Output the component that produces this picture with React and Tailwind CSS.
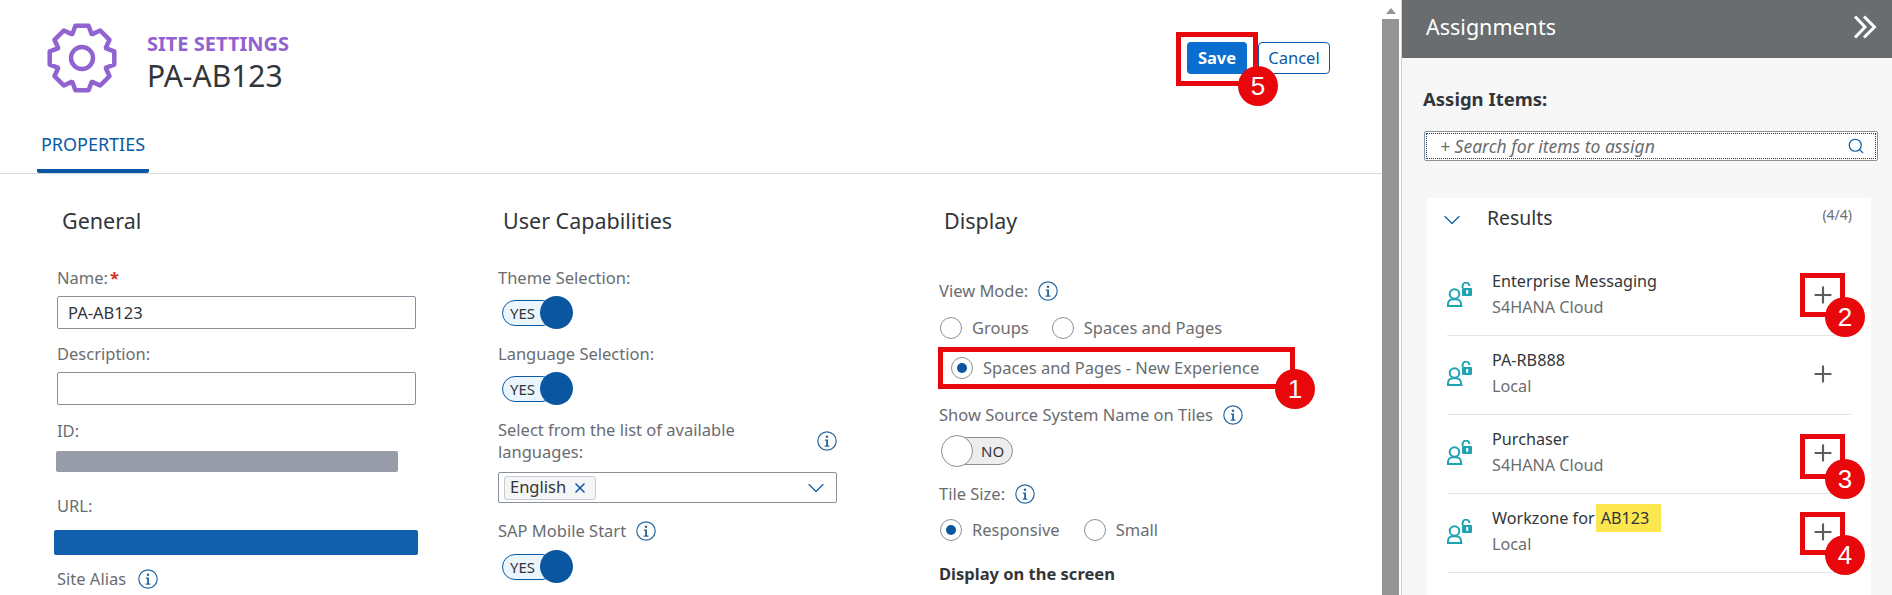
import React from 'react';
import { Search, ChevronDown, X, Plus } from 'lucide-react';

// 8-tooth gear outline, center 40,40
const gearPath = (() => {
  const pts = [];
  for (let i = 0; i < 8; i++) {
    const a = (i * Math.PI) / 4 - Math.PI / 2;
    [[-0.38, 26], [-0.2, 33], [0.2, 33], [0.38, 26]].forEach(([d, r]) => {
      pts.push(`${(40 + r * Math.cos(a + d)).toFixed(1)} ${(40 + r * Math.sin(a + d)).toFixed(1)}`);
    });
  }
  return 'M' + pts.join('L') + 'Z';
})();

const GearIcon = () => (
  <svg width="70" height="70" viewBox="5 5 70 70" fill="none" stroke="#9163d0" strokeWidth="4.5" strokeLinejoin="round">
    <path d={gearPath} />
    <circle cx="40" cy="40" r="11" />
  </svg>
);

const InfoIcon = ({ className = '' }) => (
  <svg width="20" height="20" viewBox="0 0 20 20" className={className}>
    <circle cx="10" cy="10" r="9.2" fill="none" stroke="#2b6a9f" strokeWidth="1.2" />
    <circle cx="10" cy="5.8" r="1.3" fill="#2b6a9f" />
    <path d="M7.8 8.6h3.2v6h1.4v1.1H7.6v-1.1h1.5v-4.9H7.8z" fill="#2b6a9f" />
  </svg>
);

const UserLockIcon = () => (
  <svg width="25" height="25" viewBox="0 0 25 25" fill="none" className="shrink-0 mt-[25px]">
    <circle cx="7.5" cy="12" r="4.8" stroke="#1fa3b3" strokeWidth="2" />
    <path d="M1 24v-2c0-3 2.2-4.8 5-4.8h3c2.8 0 5 1.8 5 4.8v2z" stroke="#1fa3b3" strokeWidth="2" />
    <path d="M0 24.3h15.5" stroke="#1fa3b3" strokeWidth="1.5" />
    <path d="M15.6 6V4a3.4 3.4 0 0 1 6.8 0" stroke="#1fa3b3" strokeWidth="2" />
    <rect x="15" y="6" width="10" height="8" rx="1" fill="#1fa3b3" />
    <rect x="19.2" y="8" width="2" height="3.8" fill="#fff" />
  </svg>
);

const Badge = ({ n }) => (
  <div className="absolute -right-[25px] -bottom-[25px] z-20 w-10 h-10 rounded-full bg-[#e8070a] text-white flex items-center justify-center text-[26px] leading-none font-['Liberation_Sans',sans-serif]">
    {n}
  </div>
);

const Label = ({ children, className = '' }) => (
  <div className={`h-6 leading-6 text-[#6a6d70] flex items-center ${className}`}>{children}</div>
);

const SectionTitle = ({ children }) => (
  <div className="mt-8 ml-[5px] h-[30px] leading-[30px] text-[21.5px] text-[#32363a]">{children}</div>
);

const SwitchOn = ({ className = '' }) => (
  <div className={`flex items-center h-[33px] ${className}`}>
    <div className="ml-1 w-[53px] h-[26px] rounded-full border border-[#0a5aa5] bg-[#ebf5fe] pl-[7px] text-[15px] leading-[24px] text-[#32363a]">YES</div>
    <div className="-ml-[15px] relative w-[33px] h-[33px] rounded-full bg-[#0a56a0]" />
  </div>
);

const SwitchOff = ({ className = '' }) => (
  <div className={`flex items-center h-8 ${className}`}>
    <div className="ml-[2px] relative z-10 w-8 h-8 rounded-full bg-white border border-[#89919a]" />
    <div className="-ml-5 w-[60px] h-7 rounded-r-full border border-[#89919a] bg-[#ededed] pl-[27px] text-[15px] leading-[26px] text-[#32363a]">NO</div>
  </div>
);

const Radio = ({ label, checked, className = '' }) => (
  <div className={`flex items-center h-6 ${className}`}>
    <div className="w-[22px] h-[22px] rounded-full border border-[#89919a] bg-white flex items-center justify-center shrink-0">
      {checked && <div className="w-[10px] h-[10px] rounded-full bg-[#0a56a0]" />}
    </div>
    <span className="ml-[10px] text-[#6a6d70]">{label}</span>
  </div>
);

const GeneralColumn = () => (
  <div>
    <SectionTitle>General</SectionTitle>
    <Label className="mt-[30px]">Name:<span className="ml-[2px] text-[#d92c2c] font-bold">*</span></Label>
    <div className="mt-[6px] w-[359px] h-[33px] border border-[#89919a] rounded-[2px] px-[10px] leading-[31px] text-[#32363a]">PA-AB123</div>
    <Label className="mt-[13px]">Description:</Label>
    <div className="mt-[6px] w-[359px] h-[33px] border border-[#89919a] rounded-[2px]" />
    <Label className="mt-[14px]">ID:</Label>
    <div className="mt-2 -ml-px w-[342px] h-[21px] rounded-[2px] bg-[#989ba8]" />
    <Label className="mt-[22px]">URL:</Label>
    <div className="mt-3 -ml-[3px] w-[364px] h-[25px] rounded-[2px] bg-[#1160ae]" />
    <Label className="mt-3">Site Alias<InfoIcon className="ml-[12px]" /></Label>
  </div>
);

const CapabilitiesColumn = () => (
  <div>
    <SectionTitle>User Capabilities</SectionTitle>
    <Label className="mt-[30px]">Theme Selection:</Label>
    <SwitchOn className="mt-[6px]" />
    <Label className="mt-[13px]">Language Selection:</Label>
    <SwitchOn className="mt-[6px]" />
    <div className="mt-[14px] w-[339px] flex items-center justify-between text-[#6a6d70] leading-[22px]">
      <div className="w-[270px]">Select from the list of available languages:</div>
      <InfoIcon />
    </div>
    <div className="mt-[9px] w-[339px] h-[31px] border border-[#89919a] rounded-[2px] flex items-center justify-between pl-[5px] pr-[6px]">
      <div className="w-[92px] h-6 border border-[#c8cbcf] bg-[#f5f5f5] rounded-[3px] flex items-center px-[5px] text-[#32363a]">
        English
        <X size={16} strokeWidth={2.4} className="ml-[6px] text-[#0a5aa5]" />
      </div>
      <ChevronDown size={28} strokeWidth={1} className="text-[#0a5aa5]" />
    </div>
    <Label className="mt-4">SAP Mobile Start<InfoIcon className="ml-[10px]" /></Label>
    <SwitchOn className="mt-[7px]" />
  </div>
);

const DisplayColumn = () => (
  <div>
    <SectionTitle>Display</SectionTitle>
    <Label className="mt-[43px]">View Mode:<InfoIcon className="ml-[10px]" /></Label>
    <div className="mt-[13px] flex ml-px">
      <Radio label="Groups" />
      <Radio label="Spaces and Pages" className="ml-[23px]" />
    </div>
    <div className="relative mt-[7px] -ml-px w-[357px] h-[42px] border-[5px] border-[#e8070a] flex items-center pl-[8px]">
      <Radio label="Spaces and Pages - New Experience" checked />
      <Badge n="1" />
    </div>
    <Label className="mt-[14px]">Show Source System Name on Tiles<InfoIcon className="ml-[10px]" /></Label>
    <SwitchOff className="mt-2" />
    <Label className="mt-[15px]">Tile Size:<InfoIcon className="ml-[10px]" /></Label>
    <div className="mt-3 flex ml-px">
      <Radio label="Responsive" checked />
      <Radio label="Small" className="ml-6" />
    </div>
    <div className="mt-5 h-6 leading-6 font-bold text-[#32363a]">Display on the screen</div>
  </div>
);

const items = [
  { title: 'Enterprise Messaging', sub: 'S4HANA Cloud', n: '2', box: 'top-0 h-[44px]' },
  { title: 'PA-RB888', sub: 'Local' },
  { title: 'Purchaser', sub: 'S4HANA Cloud', n: '3', box: 'top-[3px] h-[45px]' },
  { title: <>Workzone for<span className="ml-[1px] pl-[5px] pr-[12px] py-[3px] bg-[#fce74e]">AB123</span></>, sub: 'Local', n: '4', box: 'top-[2px] h-[43px]' },
];

const ItemRow = ({ item }) => (
  <div className="mx-5 h-[79px] border-b border-[#e5e5e5] flex items-start">
    <UserLockIcon />
    <div className="ml-5 mt-3 flex-1 text-[16.2px]">
      <div className="h-6 leading-6 text-[#32363a]">{item.title}</div>
      <div className="mt-[2px] h-6 leading-6 text-[#6a6d70]">{item.sub}</div>
    </div>
    <div className="relative mt-4 mr-[6px] w-[45px] h-[44px] flex items-center justify-center">
      <Plus size={26} strokeWidth={2} className="text-[#5a5e63]" />
      {item.n && (
        <div className={`absolute left-0 w-[45px] border-[5px] border-[#e8070a] ${item.box}`}>
          <Badge n={item.n} />
        </div>
      )}
    </div>
  </div>
);

export default function App() {
  return (
    <div className="flex w-[1892px] h-[595px] overflow-hidden bg-white text-[16.5px] font-['Noto_Sans',sans-serif]">
      <div className="w-[1382px] shrink-0">
        <div className="h-[116px] flex items-start pl-[47px] pr-[52px]">
          <div className="mt-[23px]"><GearIcon /></div>
          <div className="ml-[30px] mt-[32px]">
            <div className="h-6 leading-6 text-[20px] font-bold text-[#9163d0]">SITE SETTINGS</div>
            <div className="mt-[2px] h-9 leading-9 text-[30px] text-[#32363a]">PA-AB123</div>
          </div>
          <div className="relative ml-auto mt-8 w-[82px] h-[54px] border-[5px] border-[#e8070a] flex justify-center pt-[5px]">
            <div className="w-[60px] h-8 rounded-[4px] bg-[#0a6ed1] text-white font-bold text-center leading-8">Save</div>
            <Badge n="5" />
          </div>
          <div className="mt-[42px] w-[72px] h-8 rounded-[4px] border border-[#0a5aa5] text-[#0a5aa5] text-center leading-[30px]">Cancel</div>
        </div>
        <div className="h-[58px] border-b border-[#d9d9d9]">
          <div className="ml-[37px] w-[112px] h-[57px] border-b-4 border-[#0a56a0] rounded-b-[2px] pt-[3px] flex items-center justify-center text-[18px] text-[#0a5aa5]">PROPERTIES</div>
        </div>
        <div className="grid grid-cols-[441px_441px_441px] pl-[57px]">
          <GeneralColumn />
          <CapabilitiesColumn />
          <DisplayColumn />
        </div>
      </div>

      <div className="w-[17px] shrink-0 flex flex-col">
        <div className="h-[19px] flex items-center justify-center pt-[2px]">
          <div className="w-0 h-0 border-x-[5px] border-x-transparent border-b-[6px] border-b-[#949494]" />
        </div>
        <div className="flex-1 bg-[#949494]" />
      </div>

      <div className="ml-[2px] flex-1 border-l border-[#d0d0d0] bg-[#f7f7f7]">
        <div className="h-[58px] pl-6 pr-[15px] pb-[4px] bg-[#6a6d70] flex items-center justify-between text-white text-[21.5px]">
          Assignments
          <svg width="24" height="24" viewBox="0 0 24 24" fill="none" stroke="#fff" strokeWidth="3">
            <path d="M2 1.5 12 12 2 22.5M11 1.5 21.5 12 11 22.5" />
          </svg>
        </div>
        <div className="mt-[29px] ml-[21px] h-6 leading-6 text-[18.5px] font-bold text-[#32363a]">Assign Items:</div>
        <div className="mt-5 ml-[22px] w-[454px] h-[30px] border border-[#89919a] rounded-[2px] bg-white p-px">
          <div className="h-full border border-dotted border-[#0a3d70] flex items-center justify-between pl-[13px] pr-[10px] italic text-[17.5px] text-[#6a6d70]">
            + Search for items to assign
            <Search size={18} strokeWidth={1.5} className="text-[#0a5aa5]" />
          </div>
        </div>
        <div className="mt-[37px] ml-[25px] w-[444px] bg-white h-[400px]">
          <div className="h-[59px] pt-[5px] flex items-start pl-[11px] pr-[19px]">
            <ChevronDown size={28} strokeWidth={1} className="mt-[3px] text-[#0a5aa5]" />
            <div className="ml-[21px] h-[30px] leading-[30px] text-[19.4px] text-[#32363a]">Results</div>
            <div className="ml-auto text-[14px] leading-6 text-[#6a6d70]">(4/4)</div>
          </div>
          {items.map((item, i) => <ItemRow key={i} item={item} />)}
        </div>
      </div>
    </div>
  );
}
